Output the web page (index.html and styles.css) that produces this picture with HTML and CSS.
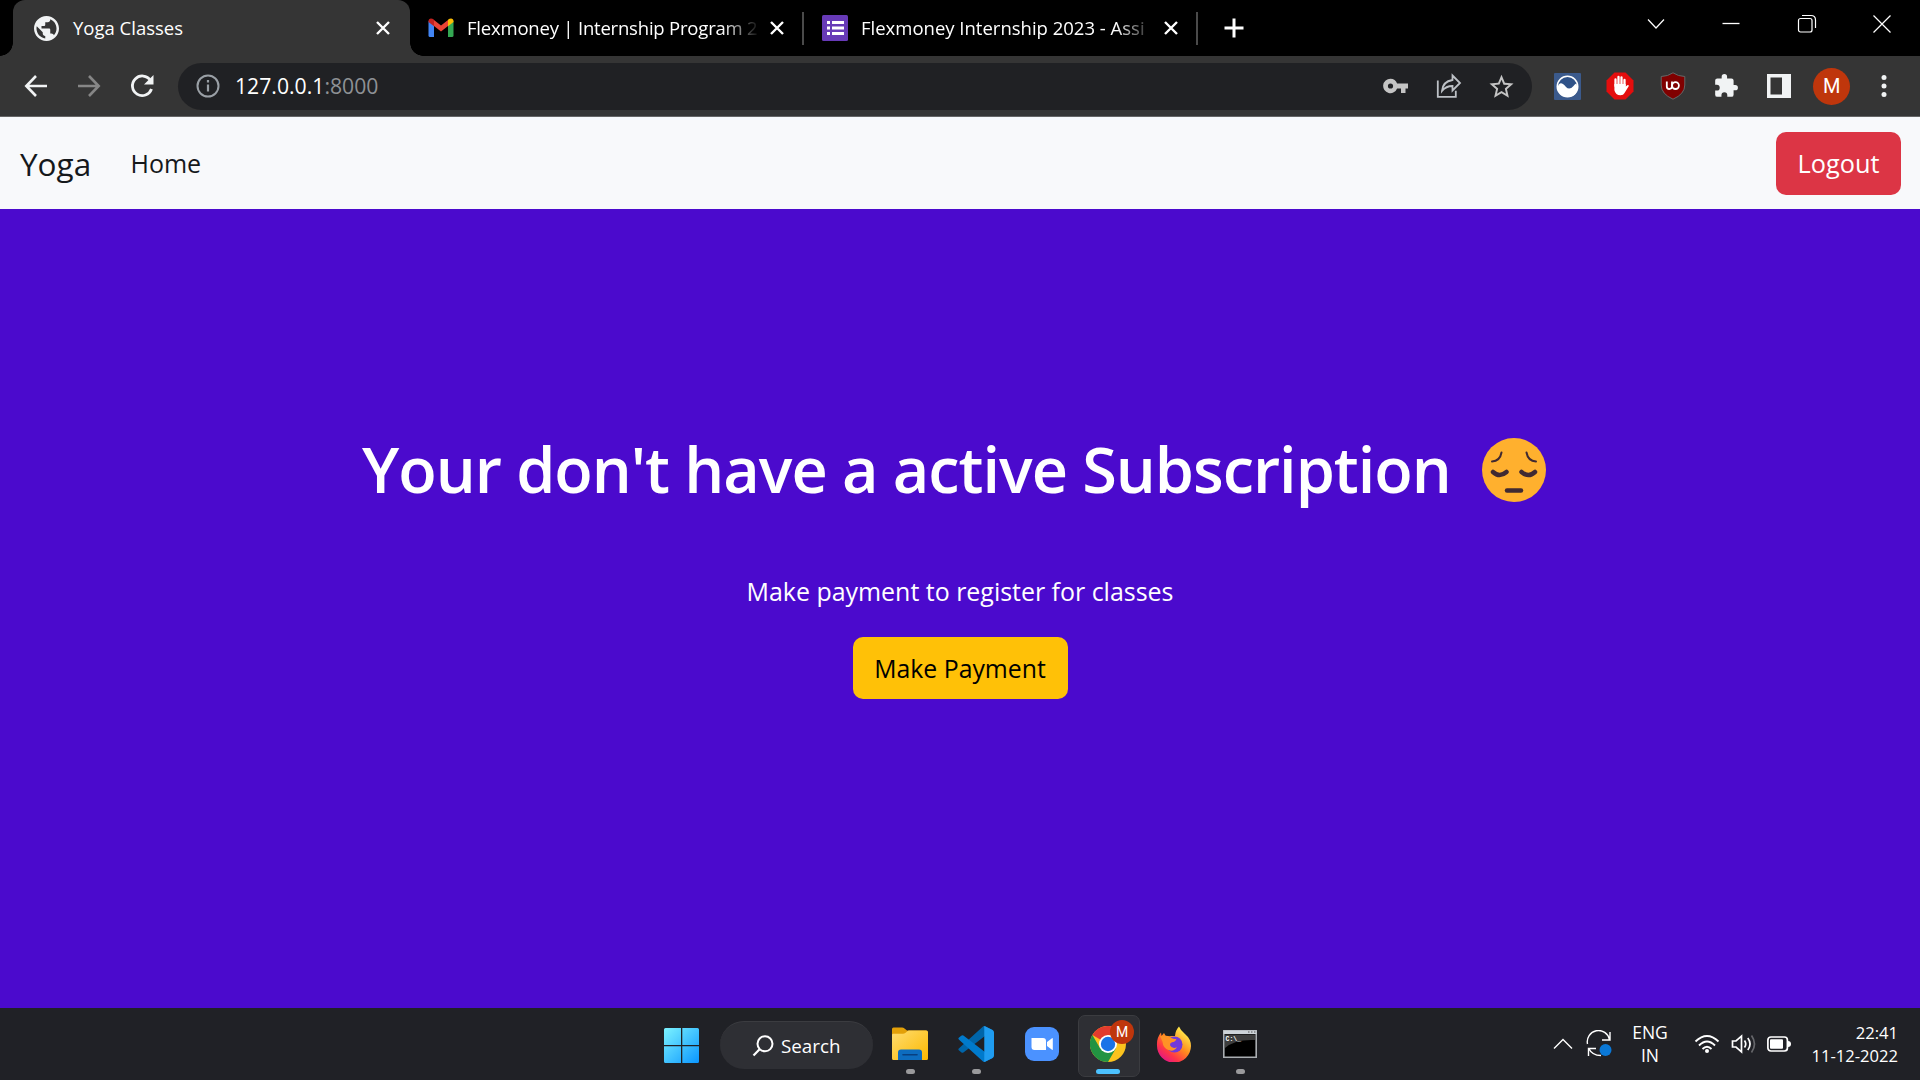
FILE: index.html
```html
<!DOCTYPE html>
<html lang="en">
<head>
<meta charset="utf-8">
<title>Yoga Classes</title>
<link rel="stylesheet" href="styles.css">
</head>
<body>
<header class="tabstrip">
  <div class="tab tab-active">
    <svg class="favicon" width="25" height="25" viewBox="2 2 20 20"><path d="M12 2C6.480 2 2 6.480 2 12s4.480 10 10 10 10-4.480 10-10S17.520 2 12 2zm-1 17.930c-3.950-.49-7-3.850-7-7.930 0-.62.08-1.210.21-1.790L9 15v1c0 1.100.9 2 2 2v1.930zm6.900-2.540c-.26-.81-1-1.390-1.900-1.390h-1v-3c0-.55-.45-1-1-1H8v-2h2c.55 0 1-.45 1-1V7h2c1.100 0 2-.9 2-2v-.41c2.930 1.190 5 4.060 5 7.410 0 2.080-.8 3.970-2.100 5.390z" fill="#f1f3f4"/></svg>
    <span class="tab-title">Yoga Classes</span>
    <svg class="close" width="16" height="16" viewBox="0 0 16 16"><path d="M2 2l12 12M14 2L2 14"/></svg>
  </div>
  <div class="tab tab-mail">
    <svg class="favicon" width="26" height="20" viewBox="0 0 26 20"><path d="M.5 3v14.500Q.5 19 2 19H6V7z" fill="#4285f4"/><path d="M25.500 3v14.500Q25.500 19 24 19H20V7z" fill="#34a853"/><path d="M6 8V2l7 5.500L20 2v6l-7 5.500z" fill="#ea4335"/><path d="M.5 4V3C.5.300 3.500-.5 6 1.800V8.300L.5 4z" fill="#c5221f"/><path d="M25.500 4V3c0-2.700-3-3.500-5.500-1.200v6.500z" fill="#fbbc04"/></svg>
    <span class="tab-title fade">Flexmoney | Internship Program 2</span>
    <svg class="close" width="16" height="16" viewBox="0 0 16 16"><path d="M2 2l12 12M14 2L2 14"/></svg>
  </div>
  <div class="tab tab-form">
    <svg class="favicon" width="26" height="26" viewBox="0 0 26 26"><rect width="26" height="26" rx="1.500" fill="#673ab7"/><path d="M5 6h3v3H5zm5 0h12v3H10zM5 11.500h3v3H5zm5 0h12v3H10zM5 17h3v3H5zm5 0h12v3H10z" fill="#fff"/></svg>
    <span class="tab-title fade">Flexmoney Internship 2023 - Assi</span>
    <svg class="close" width="16" height="16" viewBox="0 0 16 16"><path d="M2 2l12 12M14 2L2 14"/></svg>
  </div>
  <svg class="newtab" width="22" height="22" viewBox="0 0 22 22"><path d="M11 1.500v19M1.500 11h19" stroke="#fff" stroke-width="3"/></svg>
  <div class="winctl">
    <svg width="20" height="20" viewBox="0 0 20 20"><path d="M2 5.500l8 8.500 8-8.500"/></svg>
    <svg width="20" height="20" viewBox="0 0 20 20"><path d="M1.500 9.500h17" stroke-width="1.300"/></svg>
    <svg width="20" height="20" viewBox="0 0 20 20"><rect x="1.500" y="4.500" width="13.500" height="13.500" rx="2"/><path d="M5 1.500h9q4.500 0 4.500 4.500v8"/></svg>
    <svg width="20" height="20" viewBox="0 0 20 20"><path d="M1.500 1.500l17 17M18.500 1.500l-17 17"/></svg>
  </div>
</header>
<div class="toolbar">
  <div class="cells">
    <svg width="24" height="24" viewBox="0 0 24 24"><path d="M23 12H2.500M12 2L2.300 12l9.700 10" fill="none" stroke="#f1f3f4" stroke-width="2.600"/></svg>
    <svg width="24" height="24" viewBox="0 0 24 24"><path d="M1 12h20.500M12 2l9.700 10L12 22" fill="none" stroke="#868686" stroke-width="2.600"/></svg>
    <svg width="26" height="26" viewBox="0 0 26 26"><path d="M21.500 7.500A9.800 9.800 0 1 0 22.500 16" fill="none" stroke="#f1f3f4" stroke-width="2.800"/><path d="M24.500 2v9.500H15z" fill="#f1f3f4"/></svg>
  </div>
  <div class="omnibox">
    <svg width="24" height="24" viewBox="0 0 24 24"><circle cx="12" cy="12" r="10.500" fill="none" stroke="#9aa0a6" stroke-width="2"/><path d="M12 10.500v7M12 6v2.500" stroke="#9aa0a6" stroke-width="2.200"/></svg>
    <span class="url">127.0.0.1<span class="port">:8000</span></span>
    <div class="cells">
      <svg width="26" height="16" viewBox="0 0 26 16"><path d="M7.500.8a7.200 7.200 0 1 0 6.600 9.700H18V15h4.500v-4.500H25v-5H14.100A7.200 7.200 0 0 0 7.500.8zm0 4.600a2.600 2.600 0 1 1 0 5.200 2.600 2.600 0 0 1 0-5.200z" fill="#c4c4c4"/></svg>
      <svg width="26" height="26" viewBox="0 0 26 26" fill="none" stroke="#bdc1c6" stroke-width="1.800"><path d="M1.800 7.500v16.300h18v-6"/><path d="M16.500 2.500l7.500 7.500-7.500 7.500v-4.500q-6.500 0-10.500 5 .7-9.500 10.500-11z"/></svg>
      <svg width="25" height="25" viewBox="1.600 1.300 20.800 20.800"><path d="M22 9.240l-7.190-.62L12 2 9.190 8.630 2 9.240l5.460 4.730L5.820 21 12 17.270 18.180 21l-1.630-7.030L22 9.240zM12 15.400l-3.760 2.270 1-4.280-3.320-2.880 4.380-.38L12 6.100l1.710 4.040 4.380.38-3.320 2.880 1 4.280L12 15.400z" fill="#c4c4c4"/></svg>
    </div>
  </div>
  <div class="cells extensions">
    <svg width="27" height="27" viewBox="0 0 27 27"><rect width="27" height="27" rx="1" fill="#3b5a8c"/><circle cx="13.500" cy="13.500" r="10.200" fill="#2f5288" stroke="#fff" stroke-width="1.600"/><path d="M3.500 14q2-5.500 5.500-3 2 1.500 3 3 3.500 3.500 7.500-1 2-3 3-2.500 3.500 13-9 13.200-9.500 0-10-9.700z" fill="#fff"/></svg>
    <svg width="28" height="28" viewBox="0 0 28 28"><path d="M8.500.5h11l8 8v11l-8 8h-11l-8-8v-11z" fill="#e40d0d"/><path d="M9.500 14V7.500M12.500 13V5M15.500 13V5.500M18.500 14V8" stroke="#fff" stroke-width="2.300" stroke-linecap="round"/><path d="M8.400 12h11.300v2.500l2-1.500q1.500 0 1 1.200L18.500 21q-1 2.200-4 2.200-5 0-6.100-5z" fill="#fff"/></svg>
    <svg width="26" height="28" viewBox="0 0 26 28"><path d="M13 .8q5 3.500 11.800 3.700V13q0 9-11.800 14.200Q1.200 22 1.200 13V4.500Q8 4.300 13 .8z" fill="#800000" stroke="#666" stroke-width="1"/><path d="M6.800 9.500v5q0 2.500 2.500 2.500t2.700-2.500V9.500" fill="none" stroke="#fff" stroke-width="1.800"/><circle cx="15.500" cy="13.600" r="3.400" fill="none" stroke="#fff" stroke-width="1.800"/></svg>
    <svg width="26" height="26" viewBox="0 0 24 24"><path d="M20.500 11H19V7a2 2 0 0 0-2-2h-4V3.500a2.500 2.500 0 0 0-5 0V5H4a2 2 0 0 0-2 2v3.800h1.500a2.700 2.700 0 0 1 0 5.400H2V20a2 2 0 0 0 2 2h3.800v-1.500a2.700 2.700 0 0 1 5.400 0V22H17a2 2 0 0 0 2-2v-4h1.500a2.500 2.500 0 0 0 0-5z" fill="#f1f3f4"/></svg>
    <svg width="24" height="24" viewBox="0 0 24 24"><path d="M0 0h24v24H0zM3.500 3.500v17H15v-17z" fill="#f1f3f4" fill-rule="evenodd"/></svg>
    <span class="avatar">M</span>
    <svg width="6" height="24" viewBox="0 0 6 24" fill="#f1f3f4"><circle cx="3" cy="3.500" r="2.500"/><circle cx="3" cy="12" r="2.500"/><circle cx="3" cy="20.500" r="2.500"/></svg>
  </div>
</div>
<nav class="navbar">
  <span class="brand">Yoga</span>
  <span class="navlink">Home</span>
  <button class="btn btn-danger">Logout</button>
</nav>
<main class="hero">
  <h1 class="headline"><span class="headline-text">Your don't have a active Subscription</span>
    <svg class="emoji" width="66" height="66" viewBox="0 0 66 66"><circle cx="33" cy="33" r="32" fill="#ffb02e"/><g fill="none" stroke="#402a32" stroke-linecap="round"><path d="M11 27q8-.5 9.500-9M55 27q-8-.5-9.500-9" transform="translate(0 -2.500)" stroke-width="2"/><path d="M12 35q6.500 6 13.500 0M40.500 35q7 6 13.500 0" stroke-width="4.500"/><path d="M26 53.500h14" stroke-width="4.500"/></g></svg>
  </h1>
  <p class="lead">Make payment to register for classes</p>
  <button class="btn btn-warning">Make Payment</button>
</main>
<footer class="taskbar">
  <div class="app start">
    <svg width="36" height="36" viewBox="0 0 36 36"><defs><linearGradient id="win" x1="0" y1="0" x2="36" y2="36" gradientUnits="userSpaceOnUse"><stop offset="0" stop-color="#7cf3ff"/><stop offset="1" stop-color="#0793ff"/></linearGradient></defs><path d="M1.500 0H17v17H0V1.500Q0 0 1.500 0zM18.300 0h15.200Q35 0 35 1.500V17H18.300zM0 18.300h17V35H1.500Q0 35 0 33.500zM18.300 18.300H35v15.200q0 1.500-1.500 1.500H18.300z" fill="url(#win)"/></svg>
  </div>
  <div class="search">
    <svg width="22" height="22" viewBox="0 0 22 22" fill="none" stroke="#fff" stroke-width="2"><circle cx="13" cy="8.800" r="7.500"/><path d="M7.600 14.200L1.500 20.500" stroke-width="2.200"/></svg>
    <span class="search-label">Search</span>
  </div>
  <div class="app running">
    <svg width="36" height="34" viewBox="0 0 36 34"><defs><linearGradient id="fold" x1="0" y1="0" x2="1" y2="1"><stop offset="0" stop-color="#ffdc70"/><stop offset="1" stop-color="#fcb900"/></linearGradient></defs><path d="M0 2Q0 .5 1.500.5H10q1.500 0 2.500 1l2.500 2H34.500V15H0z" fill="#e3a008"/><path d="M0 8q0-1.200 1.200-1.200H11q1.300 0 2.300-.8l2-1.700q.7-.8 1.700-.8h17.500Q36 3.500 36 5v26.500q0 1.500-1.500 1.500h-33Q0 33 0 31.500z" fill="url(#fold)"/><path d="M6 33v-7.500Q6 22.500 9 22.500h18q3 0 3 3V33z" fill="#0d6cbf"/><path d="M11 27.700h14" stroke="#083f80" stroke-width="1.600" stroke-linecap="round"/></svg>
  </div>
  <div class="app running">
    <svg width="36" height="36" viewBox="0 0 100 100"><path d="M96 11L75 1Q71-.5 68 2.500L3 62q-4 3 0 6l6 5q3 3 6 .5L93 14q5-3 5 3z" fill="#0065a9"/><path d="M96 89L75 99q-4 1.500-7-1.500L3 38q-4-3 0-6l6-5q3-3 6-.5L93 86q5 3 5-3z" fill="#007acc"/><path d="M75 99q-4 1.500-7-1.500 5 3 5-3V5.500q0-6-5-3Q71-.5 75 1l21 10q4 2 4 7v64q0 5-4 7z" fill="#1f9cf0"/></svg>
  </div>
  <div class="app">
    <svg width="34" height="34" viewBox="0 0 34 34"><rect width="34" height="34" rx="9" fill="#4b92ff"/><path d="M6.500 11H18q3 0 3 3v9H9.500q-3 0-3-3zM22 15l5-3.800q.8-.4.8.6v10.500q0 1-.8.500L22 19z" fill="#fff"/></svg>
  </div>
  <div class="app current">
    <svg width="36" height="36" viewBox="0 0 36 36"><circle cx="18" cy="18" r="18" fill="#fcc31e"/><path d="M18 18L2.400 9A18 18 0 0 1 33.600 9H18z" fill="#e33b2e"/><path d="M10.200 22.500L2.400 9A18 18 0 0 0 18 36l7.800-13.500L18 18z" fill="#229342"/><circle cx="18" cy="18" r="9" fill="#fff"/><circle cx="18" cy="18" r="7.200" fill="#1a73e8"/></svg>
    <span class="badge">M</span>
  </div>
  <div class="app">
    <svg width="36" height="36" viewBox="0 0 36 36"><defs><linearGradient id="fox" x1=".85" y1=".1" x2=".2" y2=".95"><stop offset="0" stop-color="#fff44f"/><stop offset=".45" stop-color="#ff8a1e"/><stop offset=".75" stop-color="#ff3647"/><stop offset="1" stop-color="#e31587"/></linearGradient></defs><path d="M23 .5q1.500 4 6 7.500 6 5 6 12A17 17 0 0 1 1 19.500Q.5 12 5 6.500l.5 3.500 2.500-3 2 3.500 6-.5 3 0Q19.500 4 23 .5z" fill="url(#fox)"/><circle cx="18.500" cy="18.500" r="8" fill="#7139dc"/><path d="M4 10q7-1.500 11.500 2 2.500 1.500 5 .8-1 3.200-4.500 3.500-2.500.8-2 3 2 4 7 2-3 4.500-8 3-6-2-6.500-8.500z" fill="#ff9325"/></svg>
  </div>
  <div class="app running">
    <svg width="34" height="28" viewBox="0 0 34 28"><path d="M.8.800h32.400v26.400H.8z" fill="#000" stroke="#a9adb1" stroke-width="1.600"/><path d="M.5.500h33v3.500H.5z" fill="#cdd3d8"/><path d="M2 4.500h30V10Q12 9 2 18z" fill="#3d3d3d"/><path d="M25 2h1.500M28 2h1.500M31 2h1.500" stroke="#555"/><text x="2.500" y="11" class="prompt">C:\_</text></svg>
  </div>
  <div class="tray">
    <svg class="t-up" width="20" height="12" viewBox="0 0 20 12" fill="none" stroke="#fff" stroke-width="1.400"><path d="M1 10.500l9-9 9 9"/></svg>
    <svg class="t-sync" width="26" height="28" viewBox="0 0 26 28" fill="none" stroke="#fff" stroke-width="1.400"><path d="M1.500 14A11 11 0 0 1 23.500 9.500M24 2v8h-8M2.500 18q3.500 7.500 12.500 7.500M2.500 26v-7.500H10"/><circle cx="19.500" cy="20" r="6" fill="#0a78d7" stroke="none"/></svg>
    <span class="lang">ENG<br>IN</span>
    <svg class="t-wifi" width="26" height="20" viewBox="0 0 26 20" fill="none" stroke="#fff" stroke-width="1.900"><path d="M1.500 7.500q11.500-11 23 0M5 11.500q8-8 16 0M8.500 15q4.500-4.500 9 0"/><circle cx="13" cy="17" r="2" fill="#fff" stroke="none"/></svg>
    <svg class="t-vol" width="26" height="20" viewBox="0 0 26 20" fill="none" stroke="#fff" stroke-width="1.700"><path d="M1.500 7v6H5l5.500 4.800V2.200L5 7zM13.500 6.500q2.500 3.500 0 7M16.800 4q4.500 6 0 12"/><path d="M20.500 1.500q6 8.500 0 17" stroke="#66676b"/></svg>
    <svg class="t-bat" width="26" height="18" viewBox="0 0 26 18"><rect x="1.900" y="2" width="19.500" height="14" rx="3" fill="none" stroke="#fff" stroke-width="1.700"/><rect x="4" y="4.300" width="13" height="9.400" rx="1" fill="#fff"/><path d="M22 6q3 0 3 3t-3 3z" fill="#fff"/></svg>
    <span class="clock">22:41<br>11-12-2022</span>
  </div>
</footer>
</body>
</html>
```
FILE: styles.css
```css
* { box-sizing: border-box; }
body {
  margin: 0;
  width: 1920px;
  height: 1080px;
  overflow: hidden;
  display: flex;
  flex-direction: column;
  font-family: "Open Sans", "Noto Sans", sans-serif;
}
svg { display: block; flex: none; }
span { white-space: nowrap; }

/* Tab strip */
.tabstrip { height: 56px; flex: none; display: flex; align-items: center; background: #000; padding-left: 13px; color: #fff; }
.tab { height: 56px; display: flex; align-items: center; font-size: 18.500px; position: relative; padding-right: 19px; }
.tab-active { width: 397px; background: #353535; border-radius: 12px 12px 0 0; padding-left: 21px; }
.tab-active::before, .tab-active::after { content: ""; position: absolute; bottom: 0; width: 13px; height: 13px; }
.tab-active::before { left: -13px; background: radial-gradient(circle at 0 0, transparent 12.5px, #353535 13px); }
.tab-active::after { right: -13px; background: radial-gradient(circle at 100% 0, transparent 12.5px, #353535 13px); }
.tab-mail { width: 393px; padding-left: 18px; padding-right: 18px; }
.tab-form { width: 394px; padding-left: 19px; padding-right: 18px; }
.tab-mail::after, .tab-form::after { content: ""; position: absolute; right: -1px; top: 12px; width: 2px; height: 33px; background: #4a4a4a; }
.tab-title { margin-left: 13px; width: 290px; line-height: 28px; }
.tab-active .tab-title { margin-left: 14px; }
.tab-mail .tab-title { letter-spacing: -0.2px; }
.fade { -webkit-mask-image: linear-gradient(90deg, #000 255px, transparent 293px); mask-image: linear-gradient(90deg, #000 255px, transparent 293px); }
.close { margin-left: auto; fill: none; stroke: #fff; stroke-width: 2.4; }
.newtab { margin-left: 26px; }
.winctl { margin-left: auto; display: flex; gap: 55.500px; padding: 0 28px 9px 0; fill: none; stroke: #fff; stroke-width: 1.2; }

/* Toolbar */
.toolbar { height: 61px; flex: none; display: flex; align-items: center; background: #353535; border-bottom: 1px solid #656565; padding: 0 8px 0 9px; }
.cells { display: grid; grid-auto-flow: column; grid-auto-columns: 53px; place-items: center; }
.extensions { grid-auto-columns: 52.850px; }
.omnibox { width: 1354px; height: 47px; margin: 0 9px 0 10px; border-radius: 24px; background: #202124; display: flex; align-items: center; padding: 0 4px 0 18px; }
.omnibox .cells { margin-left: auto; }
.url { margin-left: 15px; padding-bottom: 1px; font-size: 21.200px; color: #fff; }
.port { color: #8e9195; }
.avatar { width: 37px; height: 37px; border-radius: 50%; background: #bf360c; color: #fff; display: grid; place-items: center; font: 20px Roboto, sans-serif; }

/* Page navbar */
.navbar { height: 92px; flex: none; display: flex; align-items: center; background: #f8f9fb; padding: 0 19px 0 20px; color: #15181b; }
.brand { font-size: 31.500px; width: 110.500px; }
.navlink { font-size: 25px; }
.btn { border: 0; border-radius: 10px; font: 24.800px "Open Sans", "Noto Sans", sans-serif; height: 62px; padding: 0; white-space: nowrap; }
.btn-danger { margin-left: auto; width: 125px; height: 63px; background: #dc3545; color: #fff; font-size: 25.300px; }
.btn-warning { width: 215px; background: #ffc107; color: #000; margin-top: 24px; }

/* Page body */
.hero { flex: 1; background: #4b0acd; color: #fff; display: flex; flex-direction: column; align-items: center; padding-top: 219px; }
.headline { margin: 0 9px 0 0; width: 1187px; height: 84px; display: flex; align-items: center; justify-content: space-between; font-size: 63px; font-weight: 600; letter-spacing: -1.03px; }
.headline-text { padding-bottom: 3px; }
.emoji { margin-right: 2px; }
.lead { margin: 58px 0 0; font-size: 24.950px; line-height: 43px; white-space: nowrap; }

/* Taskbar */
.taskbar { height: 72px; flex: none; background: #202126; display: flex; align-items: center; padding-left: 649px; color: #fff; }
.app { position: relative; width: 66px; height: 72px; display: grid; place-items: center; }
.app > svg { position: relative; }
.start { width: 71px; padding: 4px 5px 0 0; }
.search { width: 153px; height: 48px; margin: 2px 4px 0 0; border-radius: 24px; background: #2e2f34; border-top: 1px solid #3b3c40; display: flex; align-items: center; padding-left: 32px; gap: 7px; }
.search-label { font-size: 18.800px; }
.running::after, .current::after { content: ""; position: absolute; bottom: 6px; left: 28.500px; width: 9px; height: 5px; border-radius: 3px; background: #9a9a9c; }
.current::before { content: ""; position: absolute; left: 3px; top: 7px; width: 60px; height: 60px; border-radius: 7px; background: #2e2f34; border: 1px solid #3b3c40; }
.current::after { left: 21px; width: 24px; background: #4cc2ff; }
.badge { position: absolute; left: 35px; top: 12px; width: 24px; height: 24px; border-radius: 50%; background: #bf360c; display: grid; place-items: center; font: 14px Roboto, sans-serif; }
.prompt { font: bold 6.500px "Liberation Mono", monospace; fill: #fff; }
.tray { margin-left: auto; display: flex; align-items: center; padding-right: 21px; font-size: 17.500px; line-height: 23px; }
.t-sync { margin-left: 13px; }
.lang { width: 50px; margin-left: 13px; text-align: center; }
.t-wifi { margin-left: 19px; }
.t-vol { margin-left: 11px; }
.t-bat { margin-left: 9px; }
.clock { margin-left: 19px; width: 88px; text-align: right; font-size: 16.600px; padding-right: 1px; }
```
